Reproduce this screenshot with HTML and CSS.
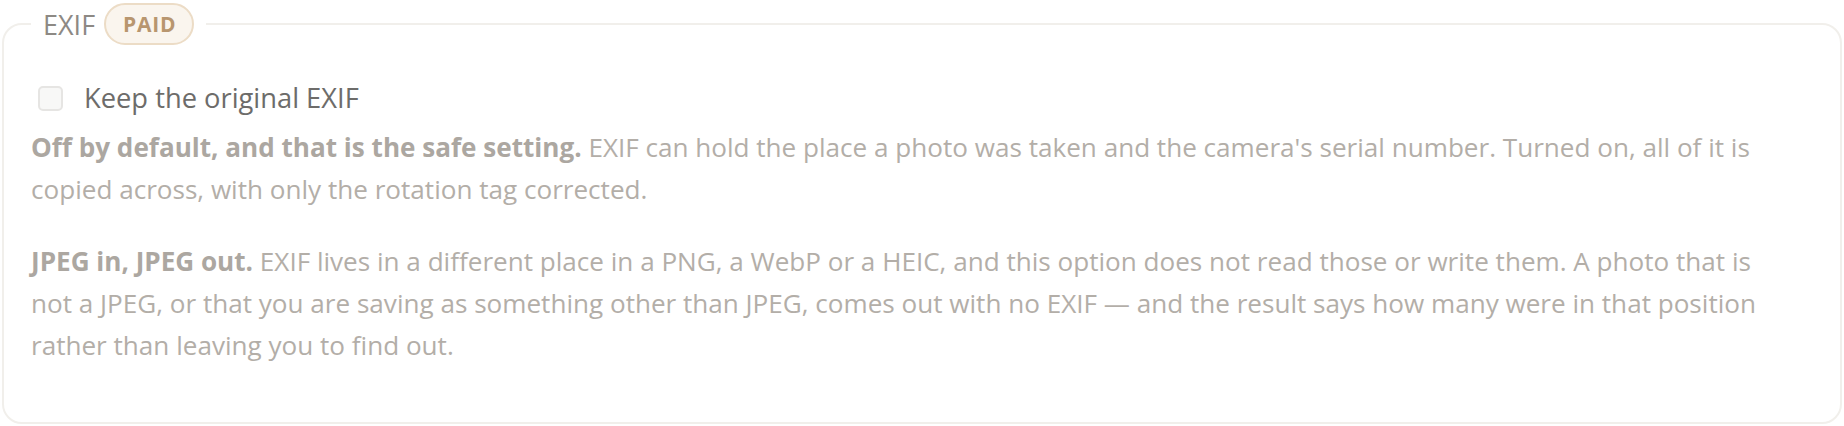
FILE: index.html
```html
<!DOCTYPE html>
<html lang="en">
<head>
    <meta charset="UTF-8">
    <meta name="viewport" content="width=device-width, initial-scale=1.0">
    <title>EXIF</title>
    <link rel="stylesheet" href="styles.css">
</head>
<body>
    <fieldset class="panel">
        <legend class="panel-title">EXIF <span class="badge">PAID</span></legend>

        <label class="option">
            <input type="checkbox" id="keepExif">
            <span>Keep the original EXIF</span>
        </label>

        <p class="note"><strong>Off by default, and that is the safe setting.</strong> EXIF can hold the place a photo was taken and the camera's serial number. Turned on, all of it is copied across, with only the rotation tag corrected.</p>

        <p class="note"><strong>JPEG in, JPEG out.</strong> EXIF lives in a different place in a PNG, a WebP or a HEIC, and this option does not read those or write them. A photo that is not a JPEG, or that you are saving as something other than JPEG, comes out with no EXIF — and the result says how many were in that position rather than leaving you to find out.</p>
    </fieldset>
</body>
</html>
```

FILE: styles.css
```css
body {
    font-family: "Open Sans", "Noto Sans", sans-serif;
    margin: 0;
    padding: 3px 0 0 0;
    background: #ffffff;
}
.panel {
    margin: 0 2px;
    padding: 38px 50px 56px 27px;
    border: 2px solid #f1efeb;
    border-radius: 20px;
}
.panel-title {
    display: flex;
    align-items: center;
    gap: 9px;
    padding: 0 12px;
    font-size: 27px;
    color: #8d8984;
}
.badge {
    display: inline-block;
    padding: 5px 16px 5px 17px;
    font-size: 21px;
    font-weight: 700;
    letter-spacing: 0.8px;
    line-height: 28px;
    color: #b8966f;
    background: #faf5ee;
    border: 2px solid #ecdcc6;
    border-radius: 21px;
}
.option {
    display: flex;
    align-items: center;
    gap: 21px;
    padding-left: 7px;
    font-size: 27.3px;
    line-height: 30px;
    color: #6d6c6a;
    cursor: pointer;
}
.option input {
    appearance: none;
    -webkit-appearance: none;
    width: 25px;
    height: 25px;
    margin: 0;
    border: 2px solid #e6e5e3;
    border-radius: 5px;
    background: #f8f8f7;
    cursor: pointer;
}
.note {
    margin: 13px 0 0 0;
    font-size: 26.1px;
    line-height: 42px;
    color: #b3aea8;
}
.note + .note {
    margin-top: 30px;
}
.note strong {
    color: #aca7a1;
}
```
